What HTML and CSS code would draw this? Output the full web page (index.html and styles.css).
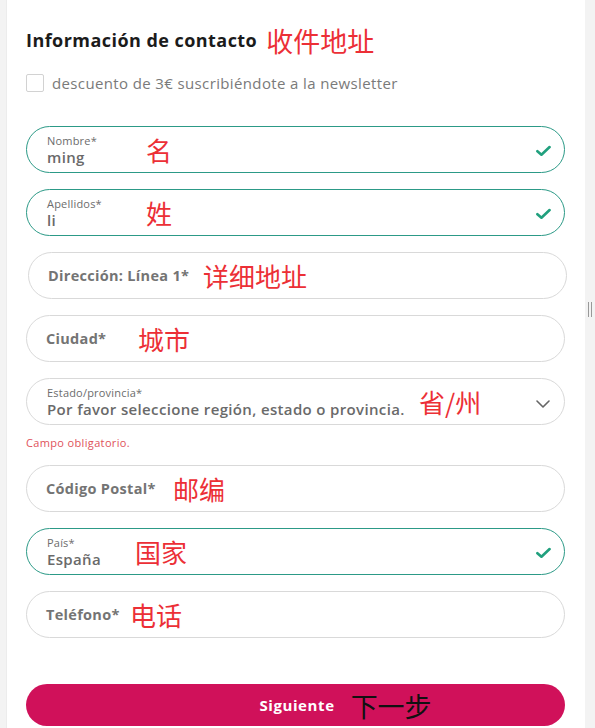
FILE: index.html
```html
<!DOCTYPE html>
<html lang="es">
<head>
<meta charset="utf-8">
<title>Información de contacto</title>
<link rel="stylesheet" href="styles.css">
</head>
<body>
<div class="page">
  <main class="card">
    <h2 class="title">Información de contacto <span class="note note-title">收件地址</span></h2>
    <label class="news">
      <span class="box"></span>
      <span class="news-text">descuento de 3€ suscribiéndote a la newsletter</span>
    </label>

    <div class="fields">
      <div class="field valid">
        <div class="stack"><span class="lbl">Nombre*</span><span class="val">ming</span></div>
        <span class="note" style="left:119px">名</span>
        <svg class="check" viewBox="0 0 16 12" width="15" height="12"><path d="M1.5 6.2 L5.8 10 L14.5 1.8" fill="none" stroke="#21a07e" stroke-width="2.8" stroke-linecap="round" stroke-linejoin="round"/></svg>
      </div>
      <div class="field valid">
        <div class="stack"><span class="lbl">Apellidos*</span><span class="val">li</span></div>
        <span class="note" style="left:119px">姓</span>
        <svg class="check" viewBox="0 0 16 12" width="15" height="12"><path d="M1.5 6.2 L5.8 10 L14.5 1.8" fill="none" stroke="#21a07e" stroke-width="2.8" stroke-linecap="round" stroke-linejoin="round"/></svg>
      </div>
      <div class="field shifted">
        <span class="ph">Dirección: Línea 1*</span>
        <span class="note" style="left:174px">详细地址</span>
      </div>
      <div class="field">
        <span class="ph">Ciudad*</span>
        <span class="note" style="left:111px">城市</span>
      </div>
      <div class="group">
        <div class="field">
          <div class="stack"><span class="lbl">Estado/provincia*</span><span class="val">Por favor seleccione región, estado o provincia.</span></div>
          <span class="note" style="left:392px">省/州</span>
          <svg class="chev" viewBox="0 0 14 8" width="14" height="8"><path d="M1 1 L7 7 L13 1" fill="none" stroke="#666" stroke-width="1.6" stroke-linecap="round" stroke-linejoin="round"/></svg>
        </div>
        <p class="err">Campo obligatorio.</p>
      </div>
      <div class="field">
        <span class="ph">Código Postal*</span>
        <span class="note" style="left:146px">邮编</span>
      </div>
      <div class="field valid">
        <div class="stack"><span class="lbl">País*</span><span class="val">España</span></div>
        <span class="note" style="left:108px">国家</span>
        <svg class="check" viewBox="0 0 16 12" width="15" height="12"><path d="M1.5 6.2 L5.8 10 L14.5 1.8" fill="none" stroke="#21a07e" stroke-width="2.8" stroke-linecap="round" stroke-linejoin="round"/></svg>
      </div>
      <div class="field">
        <span class="ph">Teléfono*</span>
        <span class="note" style="left:103px">电话</span>
      </div>
    </div>

    <button class="next"><span class="next-text">Siguiente</span><span class="note-btn">下一步</span></button>
  </main>
  <div class="rail"><span class="grip"></span></div>
</div>
</body>
</html>
```
FILE: styles.css
```css
* { box-sizing: border-box; }
html, body { margin: 0; padding: 0; }
body {
  background: #f3f3f3;
  font-family: "Open Sans", "Noto Sans", sans-serif;
  color: #666;
  width: 595px;
  height: 728px;
  overflow: hidden;
}
.page {
  display: flex;
  height: 728px;
  padding-left: 6px;
}
.card {
  width: 579px;
  background: #fff;
  padding: 27px 20px 0 19px;
  border-left: 1px solid #ececec;
}
.rail {
  flex: 1;
  display: flex;
  justify-content: center;
  padding-top: 302px;
}
.grip {
  width: 4px;
  height: 15px;
  border-left: 1px solid #999;
  border-right: 1px solid #999;
}
.title {
  margin: 0;
  font-size: 18px;
  font-weight: 700;
  color: #1b1b1b;
  height: 26px;
  display: flex;
  align-items: center;
  letter-spacing: 0.45px;
}
.note {
  font-family: "Noto Sans CJK SC", sans-serif;
  color: #ec2f36;
  font-size: 26px;
  font-weight: 400;
  line-height: 1;
  letter-spacing: 0;
}
.note-title { margin-left: 9px; font-size: 27px; }
.field .note {
  position: absolute;
  top: 50%;
  transform: translateY(-50%);
}
.news {
  display: flex;
  align-items: center;
  gap: 8px;
  margin-top: 21px;
  height: 18px;
}
.box {
  width: 18px;
  height: 18px;
  border: 1px solid #d2d2d2;
  border-radius: 2px;
}
.news-text {
  font-size: 15px;
  color: #7a7a7a;
  letter-spacing: 0.37px;
}
.fields {
  display: flex;
  flex-direction: column;
  gap: 16px;
  margin-top: 34px;
}
.group { display: flex; flex-direction: column; }
.field {
  position: relative;
  width: 539px;
  height: 47px;
  border: 1px solid #d9d9d9;
  border-radius: 24px;
  display: flex;
  align-items: center;
  padding: 0 19px;
}
.field.shifted { margin-left: 2px; }
.field.valid { border-color: #2c9a87; }
.stack {
  display: flex;
  flex-direction: column;
  gap: 1px;
  padding-left: 1px;
  padding-top: 1px;
}
.lbl {
  font-size: 11px;
  line-height: 13px;
  color: #6c6c6c;
  letter-spacing: 0.2px;
}
.val {
  font-size: 15px;
  line-height: 18px;
  font-weight: 600;
  color: #6a6a6a;
  letter-spacing: 0.35px;
}
.ph {
  font-size: 14.5px;
  font-weight: 700;
  color: #747474;
  letter-spacing: 0.3px;
}
.check {
  position: absolute;
  right: 13px;
  top: 18px;
}
.chev {
  position: absolute;
  right: 14px;
  top: 21px;
}
.err {
  margin: 11px 0 0 0;
  font-size: 11px;
  line-height: 13px;
  color: #e0525a;
  letter-spacing: 0.35px;
}
.next {
  margin-top: 46px;
  width: 539px;
  height: 42px;
  border: 0;
  border-radius: 21px;
  background: #d0115a;
  display: flex;
  align-items: center;
  justify-content: center;
  gap: 16px;
  padding: 0 0 0 100px;
  font-family: inherit;
}
.next-text {
  color: #fff;
  font-size: 15px;
  font-weight: 700;
  letter-spacing: 0.6px;
}
.note-btn {
  font-family: "Noto Sans CJK SC", sans-serif;
  color: #111;
  font-size: 27px;
  line-height: 1;
}
```
